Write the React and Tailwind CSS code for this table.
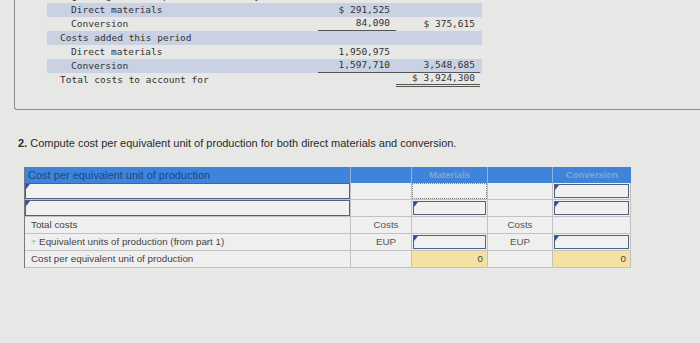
const mono = { fontFamily: '"DejaVu Sans Mono", "Liberation Mono", monospace' };

function Tri() {
  return (
    <span className="absolute left-0 top-0 w-0 h-0 border-t-[5px] border-r-[4px] border-t-[#2c4fa3] border-r-transparent" />
  );
}

function Input({ dotted }) {
  if (dotted) {
    return <div className="h-full w-full border border-dotted border-[#7d7d7d] bg-[#f1f1f1]" />;
  }
  return (
    <div className="relative h-full w-full border-[1.5px] border-[#55607c] bg-[#f1f1f1]">
      <Tri />
    </div>
  );
}

function Cell({ children, className = "" }) {
  return (
    <div className={`h-[17px] border-r border-b border-[#c2c2c2] bg-[#efefef] text-[9.8px] leading-[16px] text-[#444] whitespace-nowrap ${className}`}>
      {children}
    </div>
  );
}

function TopRow({ label, sub, band, a, b, aLine, bLine, bDouble, className = "" }) {
  return (
    <div className={`flex h-[14px] w-[435px] shrink-0 items-center ${band ? "bg-[#c9d1e3]" : ""} ${className}`}>
      <div className={`w-[271px] ${sub ? "pl-[24px]" : "pl-[13px]"}`}>{label}</div>
      <div className={`flex h-full w-[78px] items-center justify-end pr-[6px] ${aLine ? "border-b border-[#555]" : ""}`}>{a}</div>
      <div className={`flex h-full w-[84px] items-center justify-end pr-[5px] ${bLine ? "border-b border-[#555]" : ""} ${bDouble ? "border-b-[3px] border-double border-[#555]" : ""}`}>{b}</div>
    </div>
  );
}

export default function App() {
  return (
    <div className="relative h-[343px] w-[700px] overflow-hidden bg-[#e7e7e5]" style={{ fontFamily: '"Liberation Sans", Arial, sans-serif' }}>
      {/* part 1 summary */}
      <div className="ml-[14px] flex h-[110px] flex-col rounded-bl-[3px] border-b border-l border-[#8c8c8c] pl-[32px] text-[9.5px] text-[#333]" style={mono}>
        <TopRow className="-mt-[11px]" label="Beginning work in process inventory" />
        <TopRow band sub label="Direct materials" a="$ 291,525" />
        <TopRow sub label="Conversion" a="84,090" aLine b="$ 375,615" />
        <TopRow band label="Costs added this period" />
        <TopRow sub label="Direct materials" a="1,950,975" />
        <TopRow band sub label="Conversion" a="1,597,710" aLine b="3,548,685" bLine />
        <TopRow label="Total costs to account for" b="$ 3,924,300" bDouble />
      </div>

      <p className="ml-[18px] mt-[27px] text-[11px] leading-[12px] text-[#2a2a2a]">
        <span className="font-bold">2.</span> Compute cost per equivalent unit of production for both direct materials and conversion.
      </p>

      {/* part 2 table */}
      <div className="ml-[24px] mt-[18px] grid w-[606px] grid-cols-[326px_61px_76px_65px_78px] border-l border-[#7a7a7a]">
        <div className="h-[16px] border-r border-[#8fb0dc] bg-[#3d84da] pl-[3px] text-[11px] leading-[16px] text-[#1f4687]">Cost per equivalent unit of production</div>
        <div className="h-[16px] border-r border-[#8fb0dc] bg-[#3d84da]" />
        <div className="h-[16px] border-r border-[#8fb0dc] bg-[#3d84da] text-center text-[9.5px] font-bold leading-[16px] text-[#88a5d0]">Materials</div>
        <div className="h-[16px] border-r border-[#8fb0dc] bg-[#3d84da]" />
        <div className="h-[16px] bg-[#3d84da] text-center text-[9.5px] font-bold leading-[16px] text-[#88a5d0]">Conversion</div>

        <Cell><Input /></Cell>
        <Cell />
        <Cell><Input dotted /></Cell>
        <Cell />
        <Cell className="p-[1px]"><Input /></Cell>

        <Cell><Input /></Cell>
        <Cell />
        <Cell className="p-[1px]"><Input /></Cell>
        <Cell />
        <Cell className="p-[1px]"><Input /></Cell>

        <Cell className="pl-[6px]">Total costs</Cell>
        <Cell className="pl-[10px] text-center text-[#555]">Costs</Cell>
        <Cell />
        <Cell className="text-center text-[#555]">Costs</Cell>
        <Cell />

        <Cell className="pl-[6px]"><span className="text-[#8a8a8a]">÷</span> Equivalent units of production (from part 1)</Cell>
        <Cell className="pl-[10px] text-center text-[#555]">EUP</Cell>
        <Cell className="p-[1px]"><Input /></Cell>
        <Cell className="text-center text-[#555]">EUP</Cell>
        <Cell className="p-[1px]"><Input /></Cell>

        <Cell className="pl-[6px]">Cost per equivalent unit of production</Cell>
        <Cell />
        <Cell className="bg-[#f3e2a1] pr-[4px] text-right">0</Cell>
        <Cell />
        <Cell className="bg-[#f3e2a1] pr-[4px] text-right">0</Cell>
      </div>
    </div>
  );
}
